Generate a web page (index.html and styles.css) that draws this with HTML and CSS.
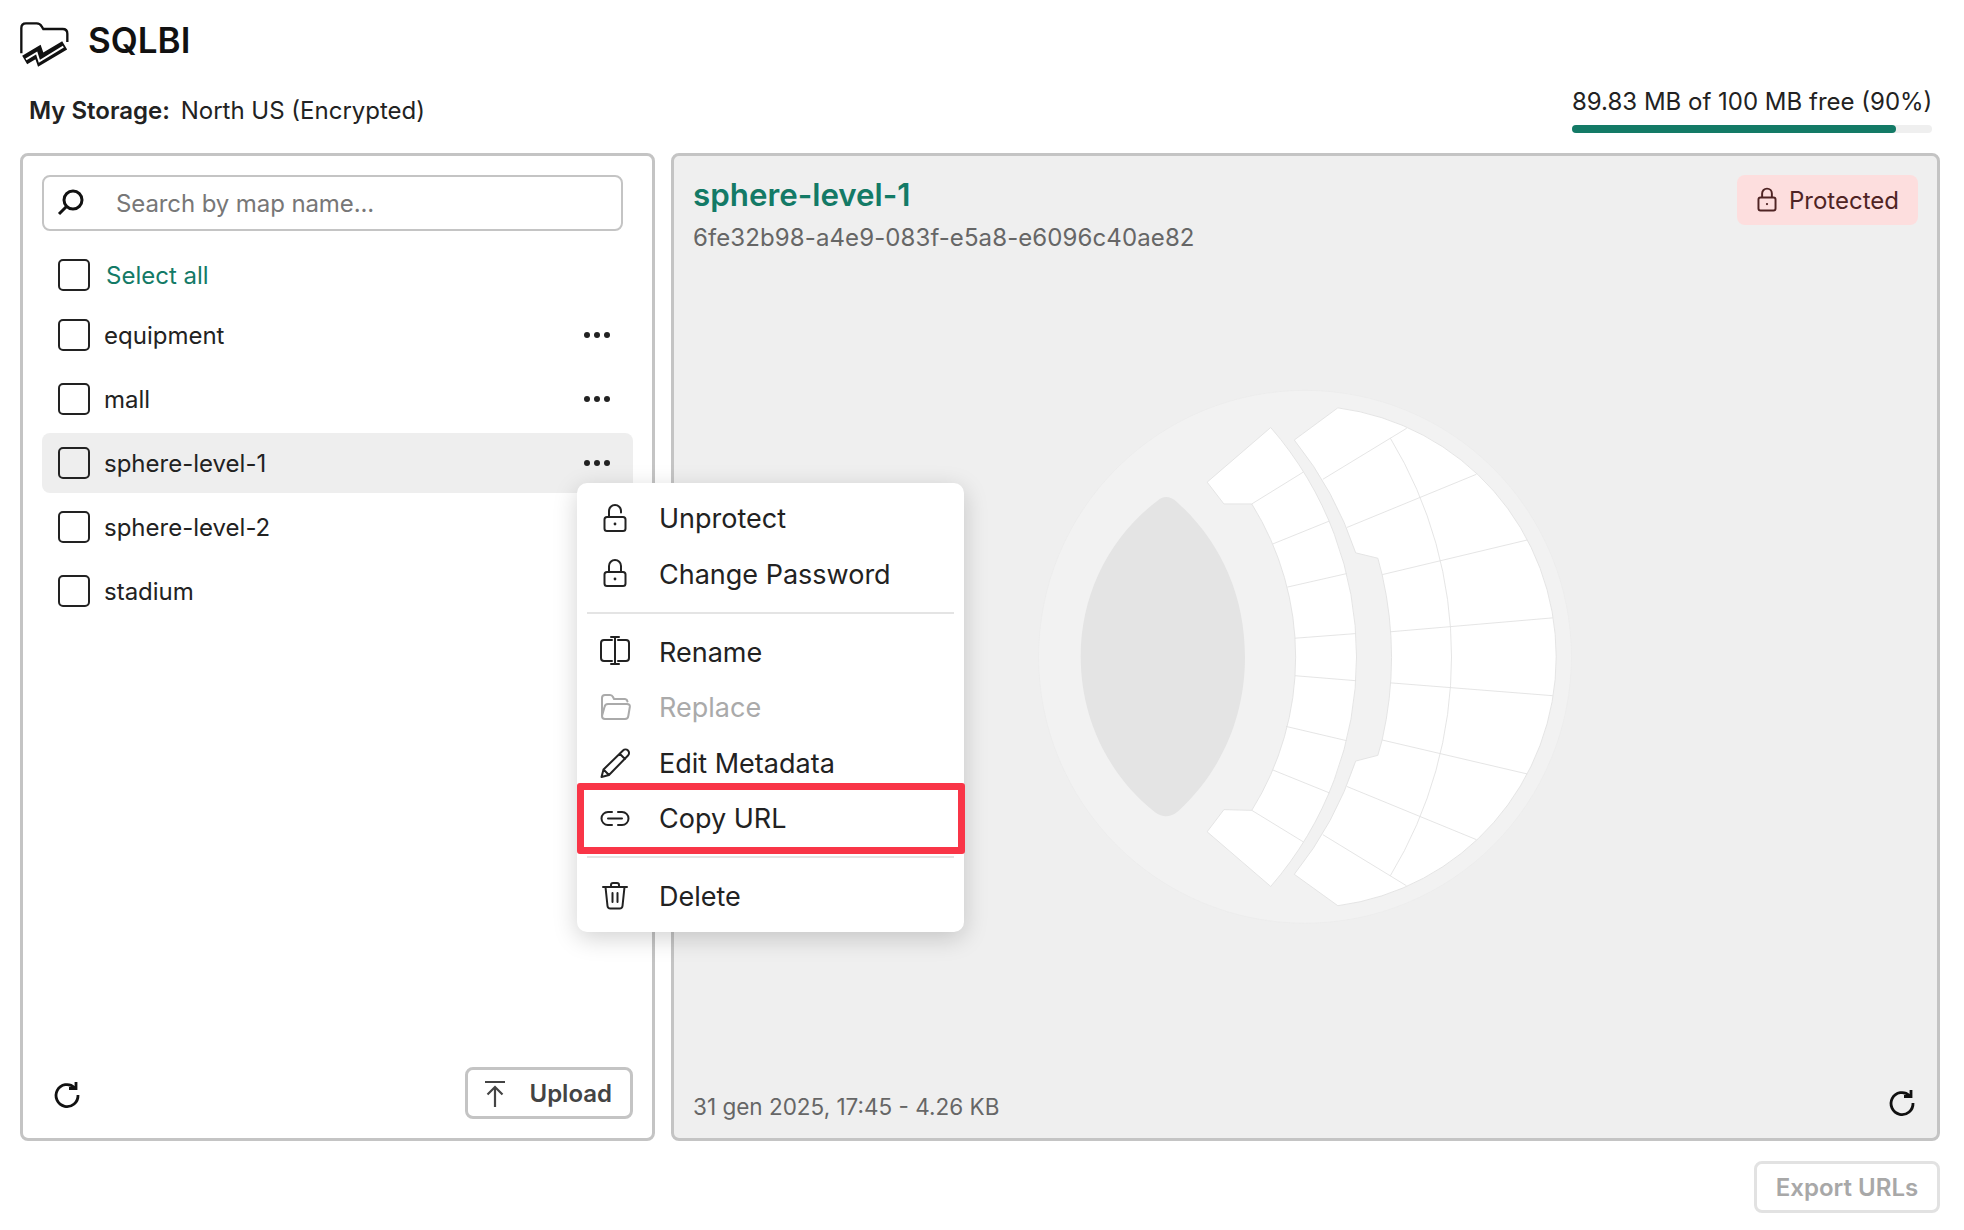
FILE: index.html
```html
<!DOCTYPE html>
<html lang="en">
<head>
<meta charset="utf-8">
<title>SQLBI</title>
<link rel="stylesheet" href="styles.css">
</head>
<body>
<div class="app">
  <header class="brand">
    <svg class="logo" viewBox="0 0 192 180" width="64" height="60" aria-hidden="true">
      <path class="logo-folder" d="M22 118V42Q22 28 36 28H68Q78 28 83 37L88 45H146Q160 45 160 59V84"/>
      <path class="logo-ribbon" d="M32 138L72 114L80 137L152 94"/>
      <path class="logo-ribbon-inner" d="M36 136L68 117L76 142L148 98"/>
    </svg>
    <span class="brand-name">SQLBI</span>
  </header>

  <div class="storage">
    <div class="storage-label"><strong>My Storage:</strong> North US (Encrypted)</div>
    <div class="quota">
      <div class="quota-text">89.83 MB of 100 MB free (90%)</div>
      <div class="quota-track"><div class="quota-fill" style="width:90%"></div></div>
    </div>
  </div>

  <main class="columns">
    <section class="list-panel">
      <label class="search">
        <svg class="search-icon" viewBox="0 0 32 32" width="32" height="32" aria-hidden="true">
          <circle cx="18" cy="13" r="9"/><path d="M11.5 19.5L4 27"/>
        </svg>
        <span class="search-placeholder">Search by map name...</span>
      </label>

      <div class="select-all"><span class="checkbox"></span><span>Select all</span></div>

      <ul class="maps">
        <li class="map"><span class="checkbox"></span><span class="map-name">equipment</span><span class="dots"><i></i><i></i><i></i></span></li>
        <li class="map"><span class="checkbox"></span><span class="map-name">mall</span><span class="dots"><i></i><i></i><i></i></span></li>
        <li class="map map-active"><span class="checkbox"></span><span class="map-name">sphere-level-1</span><span class="dots"><i></i><i></i><i></i></span>
          <div class="menu">
            <div class="menu-item">
              <svg class="icon" viewBox="0 0 32 32" aria-hidden="true"><rect x="5.5" y="14" width="21" height="14" rx="2.5"/><path d="M10 14V8a6 6 0 0 1 12 0v1.500"/><circle class="icon-dot" cx="16" cy="21" r="1.400"/></svg>
              <span>Unprotect</span>
            </div>
            <div class="menu-item">
              <svg class="icon" viewBox="0 0 32 32" aria-hidden="true"><rect x="5.5" y="14" width="21" height="14" rx="2.5"/><path d="M10 14V8a6 6 0 0 1 12 0v6"/><circle class="icon-dot" cx="16" cy="21" r="1.400"/></svg>
              <span>Change Password</span>
            </div>
            <div class="menu-sep"></div>
            <div class="menu-item">
              <svg class="icon" viewBox="0 0 32 32" aria-hidden="true"><path d="M13 4H5a3 3 0 0 0-3 3v15a3 3 0 0 0 3 3h8M19 4h8a3 3 0 0 1 3 3v15a3 3 0 0 1-3 3h-8M16 1v27M12 1h8M12 28h8"/></svg>
              <span>Rename</span>
            </div>
            <div class="menu-item menu-item-disabled">
              <svg class="icon" viewBox="0 0 32 32" aria-hidden="true"><path d="M3 24V6a3 3 0 0 1 3-3h5q2 0 3 2l1 2h11a3 3 0 0 1 2.500 2.500M3 24q0 3 3 3h20q3 0 3.300-3l1.500-9q.4-3-2.800-3H9q-3 0-3.500 3L3 24"/></svg>
              <span>Replace</span>
            </div>
            <div class="menu-item">
              <svg class="icon" viewBox="0 0 32 32" aria-hidden="true"><path d="M24 3.500a3.500 3.500 0 0 1 5 5L10 28l-7.500 2 2-7.500L24 3.500zM21 7l5 5M4.500 22.500l5.500 5.500"/></svg>
              <span>Edit Metadata</span>
            </div>
            <div class="menu-item">
              <svg class="icon" viewBox="0 0 32 32" aria-hidden="true"><path d="M13 9H9a6.500 6.500 0 0 0 0 13h4M19 9h4a6.500 6.500 0 0 1 0 13h-4M9 15.500h14"/></svg>
              <span>Copy URL</span>
              <div class="highlight"></div>
            </div>
            <div class="menu-sep menu-sep-tight"></div>
            <div class="menu-item">
              <svg class="icon" viewBox="0 0 32 32" aria-hidden="true"><path d="M4 7h24M12 7V5q0-2 2-2h4q2 0 2 2v2M6.500 7l2 19q.3 2.500 2.800 2.500h9.400q2.500 0 2.800-2.500l2-19M13.500 13v9M18.500 13v9"/></svg>
              <span>Delete</span>
            </div>
          </div>
        </li>
        <li class="map"><span class="checkbox"></span><span class="map-name">sphere-level-2</span></li>
        <li class="map"><span class="checkbox"></span><span class="map-name">stadium</span></li>
      </ul>

      <div class="list-footer">
        <svg class="refresh" viewBox="0 0 32 32" width="32" height="32" aria-hidden="true"><path d="M23.500 8.500A11 11 0 1 0 27 16"/><path class="refresh-head" d="M18 9.500h7V3"/></svg>
        <button class="btn btn-upload">
          <svg class="upload-icon" viewBox="0 0 24 32" width="24" height="32" aria-hidden="true"><path d="M2 5h20M12 30V10M4.500 17.500L12 10l7.500 7.500"/></svg>
          <span>Upload</span>
        </button>
      </div>
    </section>

    <section class="detail-panel">
      <div class="detail-head">
        <div>
          <h1 class="detail-title">sphere-level-1</h1>
          <div class="detail-id">6fe32b98-a4e9-083f-e5a8-e6096c40ae82</div>
        </div>
        <div class="badge">
          <svg class="badge-icon" viewBox="0 0 32 32" width="26" height="26" aria-hidden="true"><rect x="5.500" y="13" width="21" height="16" rx="2.500"/><path d="M10 13V8a6 6 0 0 1 12 0v5"/><circle class="icon-dot" cx="16" cy="21" r="1.400"/></svg>
          <span>Protected</span>
        </div>
      </div>

      <div class="map-view">
        <svg class="stadium" viewBox="0 0 1568 1568" width="560" height="560" aria-hidden="true">
          <circle class="st-ground" cx="798" cy="775" r="746"/>
          <path class="st-field" d="M385 338C250 440 170 600 170 775C170 950 250 1110 378 1210Q410 1234 442 1208C560 1100 630 950 630 775C630 600 560 450 440 342Q410 316 385 338Z"/>
          <path class="st-seat" d="M524 286L702 133A979 979 0 0 1 702 1418L524 1265L571 1203L649 1205A811 811 0 0 0 649 347L571 347Z"/>
          <path class="st-seat" d="M768 168L890 78A703 703 0 0 1 890 1472L768 1384A1015 1015 0 0 0 940 1067L1002 1051L1014 1008A1043 1043 0 0 0 1014 545L1002 499L940 484A1015 1015 0 0 0 768 168Z"/>
          <path class="st-line" d="M649 347L793 258M708 459L866 395M748 580L915 542M770 723L941 710M770 828L941 842M745 970L915 1010M708 1092L866 1156M649 1205L793 1293"/>
          <path class="st-line" d="M848 278L1083 135M915 413L1278 264M1014 545L1420 448M1037 705L1492 666M1037 848L1492 884M1014 1008L1420 1103M915 1138L1278 1287M848 1273L1082 1416"/>
          <path class="st-line" d="M1037 163A1181 1181 0 0 1 1037 1388"/>
        </svg>
      </div>

      <div class="detail-foot">
        <span class="detail-meta">31 gen 2025, 17:45 - 4.26 KB</span>
        <svg class="refresh" viewBox="0 0 32 32" width="32" height="32" aria-hidden="true"><path d="M23.500 8.500A11 11 0 1 0 27 16"/><path class="refresh-head" d="M18 9.500h7V3"/></svg>
      </div>
    </section>
  </main>

  <footer class="page-foot">
    <button class="btn btn-disabled">Export URLs</button>
  </footer>
</div>
</body>
</html>
```
FILE: styles.css
```css
* { box-sizing: border-box; }

html, body {
  margin: 0;
  background: #fff;
}

body {
  font-family: Inter, "Liberation Sans", sans-serif;
  font-size: 24px;
  color: #222;
}

ul { list-style: none; margin: 0; padding: 0; }

.app {
  width: 1964px;
  height: 1230px;
  padding: 20px 24px 0 20px;
  display: flex;
  flex-direction: column;
  overflow: hidden;
}

/* Brand */
.brand {
  height: 40px;
  display: flex;
  align-items: center;
  gap: 16px;
}

.logo {
  margin: 8px -6px 0 -6px;
  flex: none;
}

.logo-folder {
  fill: none;
  stroke: #111;
  stroke-width: 7;
}

.logo-ribbon {
  fill: none;
  stroke: #111;
  stroke-width: 29;
}

.logo-ribbon-inner {
  fill: none;
  stroke: #fff;
  stroke-width: 6;
}

.brand-name {
  font-size: 35px;
  font-weight: 600;
  color: #111;
}

/* Storage */
.storage {
  height: 93px;
  padding: 0 8px 20px 9px;
  display: flex;
  justify-content: space-between;
  align-items: flex-end;
}

.storage-label {
  line-height: 28px;
  padding-bottom: 8px;
}

.storage-label strong { font-weight: 600; margin-right: 4px; }

.quota { width: 360px; }

.quota-text {
  line-height: 28px;
  white-space: nowrap;
}

.quota-track {
  margin-top: 9px;
  height: 8px;
  background: #efefef;
  border-radius: 4px;
}

.quota-fill {
  height: 100%;
  background: #137a66;
  border-radius: 4px;
}

/* Columns */
.columns {
  height: 988px;
  display: flex;
  gap: 16px;
}

.list-panel,
.detail-panel {
  border: 3px solid #c4c4c4;
  border-radius: 8px;
  display: flex;
  flex-direction: column;
}

.list-panel {
  width: 635px;
  padding: 19px 19px;
  background: #fff;
}

.search {
  height: 56px;
  margin-right: 10px;
  border: 2.5px solid #c4c4c4;
  border-radius: 8px;
  display: flex;
  align-items: center;
  padding-left: 11px;
  gap: 29px;
}

.search-icon {
  fill: none;
  stroke: #111;
  stroke-width: 3;
  flex: none;
}

.search-placeholder { color: #777; letter-spacing: -0.1px; }

.checkbox {
  width: 32px;
  height: 32px;
  flex: none;
  border: 2.5px solid #222;
  border-radius: 5px;
}

.select-all {
  height: 52px;
  margin-top: 18px;
  padding-left: 16px;
  display: flex;
  align-items: center;
  gap: 16px;
  color: #137a66;
}

.maps {
  margin-top: 4px;
  display: flex;
  flex-direction: column;
  gap: 4px;
}

.map {
  height: 60px;
  padding: 0 23px 0 16px;
  display: flex;
  align-items: center;
  gap: 14px;
  border-radius: 8px;
  position: relative;
}

.map-active { background: #eee; }

.map-name { flex: 1; }

.dots {
  width: 26px;
  display: flex;
  justify-content: space-between;
}

.dots i {
  width: 6px;
  height: 6px;
  border-radius: 50%;
  background: #222;
}

.list-footer {
  margin-top: auto;
  padding-left: 9px;
  display: flex;
  justify-content: space-between;
  align-items: center;
}

.list-footer .refresh { margin-top: 4px; }

.refresh {
  fill: none;
  stroke: #111;
  stroke-width: 2.8;
}

.btn {
  font: inherit;
  height: 52px;
  display: flex;
  align-items: center;
  justify-content: space-between;
  background: #fff;
  border: 3px solid #c4c4c4;
  border-radius: 8px;
  color: #444;
  font-weight: 600;
}

.btn-upload {
  width: 168px;
  padding: 0 18px 0 15px;
}

.upload-icon {
  fill: none;
  stroke: #444;
  stroke-width: 2.2;
}

/* Menu */
.menu {
  position: absolute;
  left: 535px;
  top: 50px;
  z-index: 5;
  width: 387px;
  height: 449px;
  padding: 8px 0;
  background: #fff;
  border-radius: 10px;
  box-shadow: 0 6px 24px rgba(0, 0, 0, 0.18);
}

.menu-item {
  height: 55.4px;
  padding-left: 22px;
  display: flex;
  align-items: center;
  gap: 28px;
  font-size: 27px;
  position: relative;
}

.menu-item-disabled { color: #aaa; }

.icon {
  width: 32px;
  height: 32px;
  flex: none;
  fill: none;
  stroke: currentColor;
  stroke-width: 2;
  stroke-linecap: round;
  stroke-linejoin: round;
}

.icon-dot {
  fill: currentColor;
  stroke: none;
}

.menu-sep {
  height: 2px;
  margin: 10.5px 10px;
  background: #e4e4e4;
}

.menu-sep-tight { margin: 10px 10px; }

.highlight {
  position: absolute;
  left: 0;
  right: -1px;
  top: -8px;
  bottom: -8px;
  border: 7px solid #f93547;
  border-radius: 3px;
}

/* Detail */
.detail-panel {
  flex: 1;
  padding: 18px 19px 19px 19px;
  background: #efefef;
}

.detail-head {
  height: 79px;
  display: flex;
  justify-content: space-between;
  align-items: flex-start;
  padding-top: 1px;
}

.detail-title {
  margin: 0;
  font-size: 31.3px;
  line-height: 40px;
  font-weight: 600;
  color: #137a66;
}

.detail-id {
  margin-top: 8px;
  line-height: 30px;
  color: #666;
  letter-spacing: 0.1px;
}

.badge {
  height: 50px;
  width: 181px;
  padding-left: 17px;
  display: flex;
  align-items: center;
  gap: 9px;
  background: #fddede;
  border-radius: 8px;
  color: #4f2424;
}

.badge-icon {
  fill: none;
  stroke: #4f2424;
  stroke-width: 2.4;
}

.map-view {
  flex: 1;
  margin: 0 11px 20px 0;
  display: flex;
  align-items: center;
  justify-content: center;
}

.st-ground { fill: #f2f2f2; stroke: #ebebeb; stroke-width: 2; }
.st-field { fill: #e4e4e4; }
.st-seat { fill: #fff; stroke: #e2e2e2; stroke-width: 2.5; }
.st-line { fill: none; stroke: #e2e2e2; stroke-width: 2.5; }

.detail-foot {
  height: 32px;
  display: flex;
  justify-content: space-between;
  align-items: center;
}

.detail-meta {
  font-size: 22.5px;
  color: #666;
  padding-top: 6px;
}

.page-foot {
  margin-top: 20px;
  display: flex;
  justify-content: flex-end;
}

.btn-disabled {
  width: 186px;
  justify-content: center;
  padding: 0;
  border-color: #e2e2e2;
  color: #a8a8a8;
}
```
